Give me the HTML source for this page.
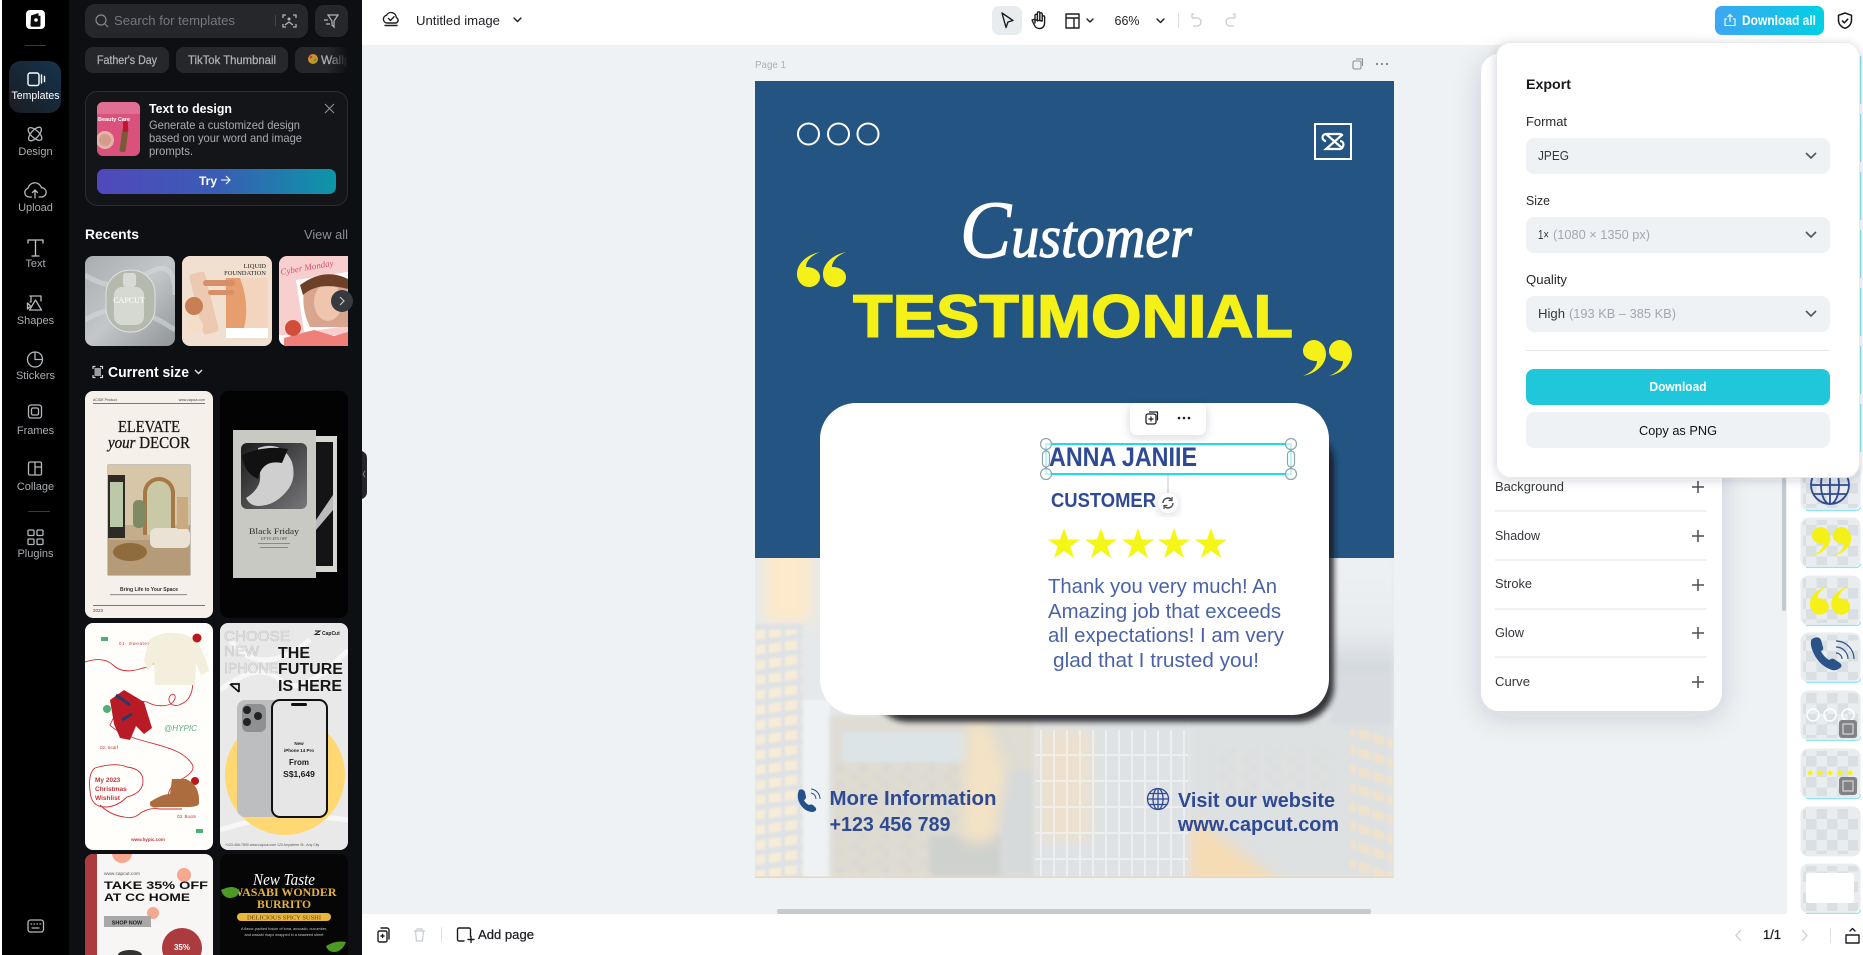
<!DOCTYPE html>
<html><head><meta charset="utf-8"><title>Untitled image</title>
<style>
html,body{margin:0;padding:0;width:1863px;height:955px;overflow:hidden;background:#fff}
svg{display:block;font-family:"Liberation Sans",sans-serif}
.rl{font-size:11px;fill:#a9acb1;text-anchor:middle}
.ic{fill:none;stroke:#b4b7bb;stroke-width:1.3;stroke-linecap:round;stroke-linejoin:round}
.k{fill:none;stroke:#1b1d20;stroke-width:1.4;stroke-linecap:round;stroke-linejoin:round}
.lb{font-size:13px;fill:#33363b}
.pl{fill:none;stroke:#4a4d52;stroke-width:1.5}
</style></head><body>
<svg width="1863" height="955" viewBox="0 0 1863 955" xmlns="http://www.w3.org/2000/svg">
<defs>
<linearGradient id="gTry" x1="0" x2="1"><stop offset="0" stop-color="#5148bd"/><stop offset=".5" stop-color="#3a5cb4"/><stop offset="1" stop-color="#0b97a8"/></linearGradient>
<linearGradient id="gDl" x1="0" x2="1"><stop offset="0" stop-color="#3ea6f2"/><stop offset="1" stop-color="#00d0e3"/></linearGradient>
<linearGradient id="gTpl" x1="0" y1="1" x2="1" y2="0"><stop offset="0" stop-color="#1a1c20"/><stop offset="1" stop-color="#15344e"/></linearGradient>
<linearGradient id="gFade" x1="0" x2="1"><stop offset="0" stop-color="#0e0f12" stop-opacity="0"/><stop offset="1" stop-color="#0e0f12"/></linearGradient>
<linearGradient id="gB" x1="0" x2="1" y1="0" y2="1"><stop offset="0" stop-color="#1b1b1b"/><stop offset="1" stop-color="#77777a"/></linearGradient>
<linearGradient id="gSilk" x1="0" x2="1" y1="0" y2="1"><stop offset="0" stop-color="#a9adb0"/><stop offset=".5" stop-color="#c4c7c9"/><stop offset="1" stop-color="#8f9497"/></linearGradient>
<linearGradient id="gRt" x1="0" x2="0" y1="0" y2="1"><stop offset="0" stop-color="#eef1f3"/><stop offset=".6" stop-color="#e8ebee"/><stop offset="1" stop-color="#cfd4d8"/></linearGradient>
<pattern id="chk" width="21" height="21" patternUnits="userSpaceOnUse"><rect width="21" height="21" fill="#e9edf0"/><rect width="10.5" height="10.5" fill="#d9dfe2"/><rect x="10.5" y="10.5" width="10.5" height="10.5" fill="#d9dfe2"/></pattern>
<pattern id="win" width="16" height="15" patternUnits="userSpaceOnUse" patternTransform="skewY(-8)"><rect x="1" y="2" width="12" height="9" fill="#fbeed6"/></pattern>
<pattern id="win2" width="14" height="19" patternUnits="userSpaceOnUse" patternTransform="skewY(18)"><rect x="1" y="2" width="11" height="9" fill="#f7e3c2"/></pattern>
<pattern id="grid" width="13" height="26" patternUnits="userSpaceOnUse"><rect width="2" height="26" fill="#f3f5f6"/><rect width="13" height="2" fill="#f3f5f6"/></pattern>
<pattern id="dots" width="23" height="17" patternUnits="userSpaceOnUse"><circle cx="4" cy="4" r="2.2" fill="#f6dcae"/><circle cx="15" cy="11" r="1.8" fill="#f3cf97"/><rect x="9" y="1" width="6" height="4" fill="#c3c8ca"/><rect x="1" y="10" width="7" height="5" fill="#ccd0d1"/></pattern>
<filter id="b1" x="-5%" y="-5%" width="110%" height="110%"><feGaussianBlur stdDeviation="1"/></filter>
<filter id="b3" x="-20%" y="-20%" width="140%" height="140%"><feGaussianBlur stdDeviation="3"/></filter>
<filter id="b6" x="-30%" y="-30%" width="160%" height="160%"><feGaussianBlur stdDeviation="7"/></filter>
<filter id="sh" x="-20%" y="-20%" width="140%" height="140%"><feDropShadow dx="0" dy="6" stdDeviation="14" flood-color="#20303c" flood-opacity=".16"/></filter>
<filter id="sh2" x="-20%" y="-20%" width="140%" height="140%"><feDropShadow dx="0" dy="2" stdDeviation="5" flood-color="#20303c" flood-opacity=".18"/></filter>
<clipPath id="cPage"><rect x="755" y="81" width="639" height="797"/></clipPath>
<clipPath id="cPhoto"><rect x="755" y="558" width="639" height="320"/></clipPath>
<clipPath id="cR1"><rect x="85" y="256" width="90" height="90" rx="8"/></clipPath>
<clipPath id="cR2"><rect x="182" y="256" width="90" height="90" rx="8"/></clipPath>
<clipPath id="cR3"><path d="M287 256H348V346H287a8 8 0 0 1-8-8V264a8 8 0 0 1 8-8Z"/></clipPath>
<clipPath id="c11"><rect x="85" y="391" width="128" height="227" rx="8"/></clipPath>
<clipPath id="c21"><rect x="85" y="623" width="128" height="227" rx="8"/></clipPath>
<clipPath id="c22"><rect x="220" y="623" width="128" height="227" rx="8"/></clipPath>
<clipPath id="c31"><rect x="85" y="854" width="128" height="110" rx="8"/></clipPath>
<clipPath id="c32"><rect x="220" y="854" width="128" height="110" rx="8"/></clipPath>
<clipPath id="cThumb"><rect x="97" y="102" width="43" height="54" rx="6"/></clipPath>
<clipPath id="cChip"><rect x="295" y="47" width="53" height="26"/></clipPath>
<g id="qo"><path d="M820 252C810 256 806 262 806 267C814 267 820 271 820 277C820 283 815 287 809 287C802 287 797 281 797 274C797 264 806 255 820 252Z"/><path d="M846 252C836 256 832 262 832 267C840 267 846 271 846 277C846 283 841 287 835 287C828 287 823 281 823 274C823 264 832 255 846 252Z"/></g>
<g id="qc"><path d="M1303 376C1313 372 1317 366 1317 361C1309 361 1303 357 1303 351C1303 345 1308 340 1314 340C1321 340 1326 347 1326 354C1326 364 1317 373 1303 376Z"/><path d="M1329 376C1339 372 1343 366 1343 361C1335 361 1329 357 1329 351C1329 345 1334 340 1340 340C1347 340 1352 347 1352 354C1352 364 1343 373 1329 376Z"/></g>
</defs>

<!-- base -->
<rect width="1863" height="955" fill="#fff"/>
<rect x="362" y="45" width="1501" height="869" fill="#eff2f5"/>

<!-- left rail -->
<rect x="2" y="0" width="67" height="955" fill="#000"/>
<rect x="69" y="0" width="293" height="955" fill="#0e0f12"/>
<rect x="26" y="10" width="19" height="19" rx="4" fill="#fff"/>
<path d="M31 15.5l7.5-2.5v2.8h2v9.5a1.5 1.5 0 0 1-1.5 1.5h-7a1.5 1.5 0 0 1-1.5-1.5Z" fill="#0c0c0c"/><circle cx="36" cy="20" r="1.8" fill="#fff"/>
<rect x="25" y="45" width="21" height="1" fill="#3a3b3e"/>
<rect x="9" y="61" width="52" height="52" rx="12" fill="url(#gTpl)"/>
<rect x="28" y="73" width="11" height="12.5" rx="2" fill="none" stroke="#fff" stroke-width="1.4"/><path d="M41.5 75v8M44.5 76.5v5" stroke="#fff" stroke-width="1.4" stroke-linecap="round"/>
<text x="35.5" y="99" class="rl" style="fill:#fff" textLength="48" lengthAdjust="spacingAndGlyphs">Templates</text>
<g class="ic"><ellipse cx="35" cy="134" rx="3.8" ry="8.5" transform="rotate(42 35 134)"/><ellipse cx="35" cy="134" rx="3.8" ry="8.5" transform="rotate(-48 35 134)"/></g>
<text x="35.5" y="155" class="rl">Design</text>
<path class="ic" d="M31.5 197H29a4.5 4.5 0 0 1-1-8.8 7 7 0 0 1 13.5-.5 4.6 4.6 0 0 1 0 9.3H39M35 198v-8M32.5 192.5l2.5-2.5 2.5 2.5"/>
<text x="35.5" y="211" class="rl">Upload</text>
<path class="ic" d="M28 243v-3h15v3M35.5 240v16M32 256h7" style="stroke:#c4c6c9"/>
<text x="35.5" y="267" class="rl">Text</text>
<path class="ic" d="M30 296h11v5M31 296v6h-1M27.5 303l3 3-3 3zM35.5 300l6 10h-12z"/>
<text x="35.5" y="324" class="rl">Shapes</text>
<path class="ic" d="M35 352a7.5 7.5 0 1 0 7.5 7.5h-7.5zM35 352c4.5 0 7.5 3 7.5 7.5"/>
<text x="35.5" y="379" class="rl">Stickers</text>
<rect x="28.5" y="405" width="13" height="13" rx="2.5" class="ic"/><rect x="31.5" y="408" width="7" height="7" rx="1.5" class="ic"/>
<text x="35.5" y="434" class="rl">Frames</text>
<path class="ic" d="M30 462h10a1.5 1.5 0 0 1 1.5 1.5v10a1.5 1.5 0 0 1-1.5 1.5H30a1.5 1.5 0 0 1-1.5-1.5v-10A1.5 1.5 0 0 1 30 462ZM35 462v13M35 467h6.5"/>
<text x="35.5" y="490" class="rl">Collage</text>
<rect x="28" y="511" width="22" height="1" fill="#3a3b3e"/>
<g class="ic"><rect x="28" y="530" width="6" height="5.5" rx="1"/><rect x="37" y="530" width="6" height="5.5" rx="1"/><rect x="28" y="539" width="6" height="5.5" rx="1"/><rect x="37" y="539" width="6" height="5.5" rx="1"/></g>
<text x="35.5" y="557" class="rl">Plugins</text>
<rect x="28" y="920" width="15.5" height="12" rx="2.5" class="ic"/><path d="M31 924h.6M34 924h.6M37 924h.6M40 924h.6M32 928h7" class="ic"/>

<!-- panel search -->
<rect x="85" y="4" width="223" height="34" rx="10" fill="#26272b"/>
<circle cx="101" cy="20" r="5" fill="none" stroke="#85888d" stroke-width="1.2"/><path d="M105 24l3 3" stroke="#85888d" stroke-width="1.2"/>
<text x="114" y="25" font-size="13" fill="#74777c" textLength="121" lengthAdjust="spacingAndGlyphs">Search for templates</text>
<rect x="275" y="15" width="1" height="11" fill="#44464a"/>
<path d="M283 18v-3h3M293 15h3v3M296 24v3h-3M286 27h-3v-3" fill="none" stroke="#b4b6ba" stroke-width="1.3"/><circle cx="289" cy="19" r="1.5" fill="#b4b6ba"/><path d="M285 25l4-3 4 3" fill="none" stroke="#b4b6ba" stroke-width="1.3"/>
<rect x="315" y="5" width="33" height="32" rx="9" fill="#26272b"/>
<path d="M328 15h10l-4 6v6l-2-2v-4zM324 20h4M326 24h4" fill="none" stroke="#b4b6ba" stroke-width="1.2"/>
<!-- chips -->
<rect x="85" y="47" width="84" height="26" rx="8" fill="#26272b"/>
<text x="127" y="64" font-size="12" fill="#b0b2b6" stroke="#b0b2b6" stroke-width=".25" text-anchor="middle" textLength="60" lengthAdjust="spacingAndGlyphs">Father's Day</text>
<rect x="176" y="47" width="112" height="26" rx="8" fill="#26272b"/>
<text x="232" y="64" font-size="12" fill="#b0b2b6" stroke="#b0b2b6" stroke-width=".25" text-anchor="middle" textLength="88" lengthAdjust="spacingAndGlyphs">TikTok Thumbnail</text>
<g clip-path="url(#cChip)"><rect x="295" y="47" width="70" height="26" rx="8" fill="#26272b"/><circle cx="313" cy="59" r="5" fill="#c9932c"/><circle cx="311" cy="57" r="1.3" fill="#d33"/><circle cx="315" cy="60" r="1.3" fill="#4a4"/>
<text x="321" y="64" font-size="12" fill="#b0b2b6" stroke="#b0b2b6" stroke-width=".25">Wallpaper</text><rect x="328" y="47" width="20" height="26" fill="url(#gFade)"/></g>
<!-- text to design -->
<rect x="85.5" y="91.5" width="262" height="114" rx="12" fill="#141518" stroke="#2c2d31"/>
<g clip-path="url(#cThumb)"><rect x="97" y="102" width="43" height="54" fill="#d9517c"/><rect x="97" y="102" width="43" height="12" fill="#e06f93"/><circle cx="105" cy="140" r="9" fill="#e3b4a6"/><circle cx="105" cy="140" r="6" fill="#d39b8b"/><rect x="121" y="128" width="6" height="24" rx="1.5" fill="#7a5a35" transform="rotate(8 124 140)"/><rect x="123" y="121" width="5" height="11" rx="2" fill="#c01530"/><text x="98" y="121" font-size="5.5" font-weight="700" fill="#fff">Beauty Care</text></g>
<text x="149" y="113" font-size="13" font-weight="700" fill="#fff" textLength="83" lengthAdjust="spacingAndGlyphs">Text to design</text>
<g font-size="12" fill="#a8abb0"><text x="149" y="129" textLength="151" lengthAdjust="spacingAndGlyphs">Generate a customized design</text><text x="149" y="142" textLength="153" lengthAdjust="spacingAndGlyphs">based on your word and image</text><text x="149" y="155" textLength="44" lengthAdjust="spacingAndGlyphs">prompts.</text></g>
<path d="M325 104l9 9M334 104l-9 9" stroke="#8f9296" stroke-width="1.1"/>
<rect x="97" y="169" width="239" height="25" rx="7" fill="url(#gTry)"/>
<text x="208" y="185" font-size="12" font-weight="700" fill="#fff" text-anchor="middle">Try</text>
<path d="M221 180h9M226 176l4 4-4 4" fill="none" stroke="#fff" stroke-width="1.1"/>
<!-- recents -->
<text x="85" y="239" font-size="14" font-weight="700" fill="#fff" textLength="54" lengthAdjust="spacingAndGlyphs">Recents</text>
<text x="348" y="239" font-size="12.5" fill="#8a8e94" text-anchor="end" textLength="44" lengthAdjust="spacingAndGlyphs">View all</text>
<g clip-path="url(#cR1)"><rect x="85" y="256" width="90" height="90" fill="url(#gSilk)"/><path d="M85 275q30 20 60 0t30 20M85 320q40-25 90 10" stroke="#d6d8da" stroke-width="5" fill="none" opacity=".6"/><rect x="106" y="270" width="49" height="62" rx="24" fill="#b5b9ae" stroke="#dfe2e2" stroke-width="1"/><rect x="123" y="273" width="13" height="14" rx="3" fill="#d9dad6"/><rect x="114" y="287" width="30" height="38" rx="8" fill="#d6d8d2"/><text x="129" y="303" font-size="8" fill="#fff" text-anchor="middle" font-family="Liberation Serif">CAPCUT</text></g>
<g clip-path="url(#cR2)"><rect x="182" y="256" width="90" height="90" fill="#f1e0cf"/><rect x="196" y="272" width="16" height="62" rx="3" fill="#eec9b2" transform="rotate(-14 204 303)"/><rect x="226" y="278" width="42" height="50" fill="#e79e6e"/><path d="M240 278h28v50h-24q6-24-4-50" fill="#f3d4bf"/><rect x="226" y="328" width="42" height="10" fill="#fff"/><text x="266" y="268" font-size="6.5" fill="#222" text-anchor="end" font-family="Liberation Serif">LIQUID</text><text x="266" y="275" font-size="6.5" fill="#222" text-anchor="end" font-family="Liberation Serif">FOUNDATION</text><rect x="203" y="280" width="32" height="6" rx="3" fill="#d78f67"/><rect x="208" y="290" width="26" height="5" rx="2.5" fill="#d78f67"/><circle cx="194" cy="306" r="9" fill="#c97e55"/><circle cx="195" cy="326" r="8" fill="#f6ddc7"/></g>
<g clip-path="url(#cR3)"><rect x="279" y="256" width="69" height="90" fill="#f7cfcf"/><path d="M296 280l52-8v54l-44 6z" fill="#fff"/><path d="M305 285h43v42h-38q-10-20-5-42" fill="#d9a58e"/><ellipse cx="328" cy="302" rx="14" ry="19" fill="#f0c5ad"/><path d="M300 285q25-18 48-6v10q-30-8-45 6z" fill="#6e4028"/><rect x="279" y="335" width="69" height="11" fill="#fff"/><path d="M284 338l30-8 20 6 14-4v14h-64z" fill="#f07f7a"/><circle cx="293" cy="328" r="8" fill="#cf4e3a"/><text x="281" y="275" font-size="9" fill="#e0506a" font-style="italic" font-family="Liberation Serif" transform="rotate(-10 281 275)">Cyber Monday</text></g>
<circle cx="342" cy="301" r="11" fill="#36393e"/><path d="M340 297l4 4-4 4" fill="none" stroke="#c3c5c8" stroke-width="1.2"/>
<path d="M93 369v-2.5h2.5M100 366.5h2.5v2.5M102.5 375v2.500H100M95.500 377.500H93V375" fill="none" stroke="#d5d6d8" stroke-width="1.2"/><rect x="94.5" y="368" width="6.5" height="8" fill="#9a9c9f"/>
<text x="108" y="377" font-size="14.5" font-weight="700" fill="#fff" textLength="81" lengthAdjust="spacingAndGlyphs">Current size</text>
<path d="M195 370l3.5 3.5 3.5-3.5" fill="none" stroke="#e3e4e6" stroke-width="1.4"/>

<!-- template 1 -->
<g clip-path="url(#c11)"><rect x="85" y="391" width="128" height="227" fill="#f5f0ea"/>
<text x="93" y="401" font-size="3.5" fill="#444">ACIDE Product</text><text x="205" y="401" font-size="3.5" fill="#444" text-anchor="end">www.capcut.com</text><rect x="93" y="403" width="112" height=".7" fill="#444"/>
<text x="149" y="432" font-size="17" fill="#1a1714" stroke="#1a1714" stroke-width=".3" text-anchor="middle" font-family="Liberation Serif" textLength="62" lengthAdjust="spacingAndGlyphs">ELEVATE</text>
<text x="149" y="448" font-size="17" fill="#1a1714" stroke="#1a1714" stroke-width=".3" text-anchor="middle" font-family="Liberation Serif" textLength="82" lengthAdjust="spacingAndGlyphs"><tspan font-style="italic">your</tspan> DECOR</text>
<rect x="108" y="465" width="82" height="110" fill="#c4ad8b" stroke="#6f6b63" stroke-width=".7"/><rect x="108" y="465" width="82" height="60" fill="#d8c6a9"/><path d="M108 475h17v63h-17z" fill="#2e2b27"/><path d="M110 482h13v45h-13z" fill="#bcc9a9"/><path d="M143 535v-42a16 16 0 0 1 32 0v42z" fill="#a67845"/><path d="M147 535v-42a12 12 0 0 1 24 0v42z" fill="#c9c9a8"/><rect x="108" y="540" width="82" height="35" fill="#b59b77"/><rect x="150" y="528" width="40" height="20" rx="6" fill="#e9e2d5"/><ellipse cx="130" cy="552" rx="17" ry="9" fill="#8f6b3e"/><rect x="133" y="500" width="12" height="28" fill="#7e8a63" rx="5"/><rect x="177" y="497" width="11" height="32" fill="#c9ab7f"/>
<text x="149" y="591" font-size="5" font-weight="700" fill="#333" text-anchor="middle" textLength="58" lengthAdjust="spacingAndGlyphs">Bring Life to Your Space</text>
<rect x="110" y="594" width="77" height="1.2" fill="#999"/><rect x="93" y="605" width="112" height=".7" fill="#444"/><text x="93" y="612" font-size="4.5" fill="#444">2023</text></g>
<!-- template 2 -->
<rect x="220" y="391" width="128" height="227" rx="8" fill="#030303"/>
<rect x="300" y="436" width="37" height="136" fill="#d7d7d2"/><rect x="316" y="442" width="17" height="124" fill="#141414"/><path d="M316 520l17-25v15l-17 20z" fill="#bbb"/>
<rect x="233" y="430" width="83" height="148" fill="#c9c9c3"/>
<rect x="241" y="443" width="66" height="66" rx="6" fill="url(#gB)"/><path d="M258 448q24-8 34 14 5 18-6 30-12 14-28 14-8 0-12-8 16-10 14-24-1-12-2-26z" fill="#cfcfcf"/><path d="M242 455q22-10 46-6l-6 14q-20-4-24 16-14-6-16-24z" fill="#111"/>
<text x="274" y="534" font-size="8.5" fill="#2b2b2b" text-anchor="middle" font-family="Liberation Serif" textLength="50" lengthAdjust="spacingAndGlyphs">Black Friday</text>
<text x="274" y="540" font-size="3.8" fill="#444" text-anchor="middle" font-family="Liberation Serif">UP TO 45% OFF</text>
<rect x="258" y="543" width="32" height="1" fill="#888"/><rect x="260" y="547" width="28" height="1" fill="#888"/>
<!-- template 3 -->
<g clip-path="url(#c21)"><rect x="85" y="623" width="128" height="227" fill="#fffefa"/>
<path d="M85 662q18-6 28 3 10 10 30 3 4 0 12-5M193 680c0 15-5 22-14 25-8 2-12-4-9-9 3-4 8-1 3 6-4 5-18 5-26 0-8-2-16 0-22 3-8 4-12 14-15 20q5 6 24 13c24 8 48 10 58 26 4 6-4 12-12 16-6 4-12 8-12 18M100 805q10 10 24 12 8 2 14-2 10-8 22-6h22" fill="none" stroke="#cf2c35" stroke-width=".9"/>
<path d="M150 639q14-8 24-6 14 0 24 10 8 14 11 28l-8 4-5-12-1 22h-40l-1-22-6 8-4-10q2-14 6-22z" fill="#f4eedd"/>
<circle cx="197" cy="638" r="4.5" fill="#b8191d"/><circle cx="195" cy="781" r="4" fill="#b8191d"/><circle cx="107" cy="709" r="4" fill="#4caf74"/>
<path d="M110 700l14-10 20 12 8 26-8 6-8-8-6 14-10-2-6-14z" fill="#b81b25"/><path d="M116 695l14 10M122 720l10-6" stroke="#263a6b" stroke-width="3"/>
<path d="M150 802q12-8 20-8l2-15h14q14 6 13 24 0 4-12 4h-28q-10 2-9-5z" fill="#ad6c3d"/>
<path d="M95 768q20-6 32-1 16 2 16 14t-16 16q-10 10-22 10-14 0-15-16-2-18 5-23z" fill="none" stroke="#cf2c35" stroke-width=".9"/>
<g font-size="6.5" font-weight="700" fill="#c6333b"><text x="95" y="782">My 2023</text><text x="95" y="791">Christmas</text><text x="95" y="800">Wishlist</text></g>
<g font-size="4.5" fill="#c6333b"><text x="119" y="645" textLength="30">01. Sweater</text><text x="100" y="749">02. Scarf</text><text x="177" y="818">03. Boots</text></g>
<text x="164" y="731" font-size="8.5" font-style="italic" fill="#55b087" textLength="33" lengthAdjust="spacingAndGlyphs">@HYPIC</text>
<text x="148" y="841" font-size="4.5" font-weight="700" fill="#c6333b" text-anchor="middle">www.hypic.com</text>
<rect x="101" y="637" width="7" height="4" fill="#4caf74"/><rect x="196" y="829" width="7" height="4" fill="#4caf74"/></g>
<!-- template 4 -->
<g clip-path="url(#c22)"><rect x="220" y="623" width="128" height="227" fill="#e9e9e9"/><path d="M220 690q40-30 60-10t68-30M230 640q30 40 80 0M220 830q60-20 128-10" stroke="#f7f7f7" stroke-width="5" fill="none"/>
<circle cx="285" cy="775" r="60" fill="#ffd873"/>
<rect x="237" y="700" width="55" height="117" rx="8" fill="#bdbebf"/><rect x="242" y="704" width="24" height="28" rx="6" fill="#8f9092"/><circle cx="247" cy="710" r="4" fill="#222"/><circle cx="258" cy="716" r="4" fill="#222"/><circle cx="247" cy="722" r="4" fill="#222"/>
<rect x="272" y="700" width="55" height="117" rx="8" fill="#e6e6e6" stroke="#111" stroke-width="2"/><rect x="291" y="703" width="16" height="3" rx="1.5" fill="#111"/>
<g font-size="15.5" font-weight="700" fill="#171717"><text x="278" y="658" textLength="32" lengthAdjust="spacingAndGlyphs">THE</text><text x="278" y="674" textLength="65" lengthAdjust="spacingAndGlyphs">FUTURE</text><text x="278" y="691" textLength="64" lengthAdjust="spacingAndGlyphs">IS HERE</text></g>
<g font-size="15" fill="none" stroke="#c6c6c6" stroke-width=".6"><text x="224" y="641" textLength="66" lengthAdjust="spacingAndGlyphs">CHOOSE</text><text x="224" y="656">NEW</text><text x="224" y="673" textLength="54" lengthAdjust="spacingAndGlyphs">IPHONE</text></g>
<path d="M231 684h8v8M239 692l-9-8" fill="none" stroke="#111" stroke-width="1.7"/>
<g fill="#1c1c1c" text-anchor="middle" font-weight="700"><text x="299" y="745" font-size="4.5">New</text><text x="299" y="752" font-size="4.5">iPhone 14 Pro</text><text x="299" y="765" font-size="8">From</text><text x="299" y="777" font-size="8.5">S$1,649</text></g>
<text x="322" y="635" font-size="5" font-weight="700" fill="#222">CapCut</text><path d="M315 631h5l-5 3.5h5" stroke="#222" fill="none"/>
<text x="225" y="846" font-size="3.5" fill="#555">+123-456-7890   www.capcut.com   123 Anywhere St., Any City</text></g>
<!-- template 5 -->
<g clip-path="url(#c31)"><rect x="85" y="854" width="128" height="110" fill="#f7f6f4"/><rect x="85" y="854" width="12" height="110" fill="#ab3b3f"/><circle cx="122" cy="853" r="10" fill="#f6a78f"/><circle cx="184" cy="875" r="7" fill="#f6a78f"/><circle cx="153" cy="913" r="6" fill="#f6a78f"/>
<text x="104" y="875" font-size="4.8" fill="#555">www.capcut.com</text>
<text x="104" y="889" font-size="11" font-weight="700" fill="#111" textLength="104" lengthAdjust="spacingAndGlyphs">TAKE 35% OFF</text><text x="104" y="901" font-size="11" font-weight="700" fill="#111" textLength="86" lengthAdjust="spacingAndGlyphs">AT CC HOME</text>
<rect x="104" y="916" width="47" height="11" fill="#a8a8a8"/><text x="127" y="924.5" font-size="5.5" font-weight="700" fill="#222" text-anchor="middle">SHOP NOW</text>
<circle cx="182" cy="948" r="20" fill="#ab3b3f"/><text x="182" y="950" font-size="8" font-weight="700" fill="#fff" text-anchor="middle">35%</text><ellipse cx="130" cy="955" rx="12" ry="5" fill="#333"/></g>
<!-- template 6 -->
<g clip-path="url(#c32)"><rect x="220" y="854" width="128" height="110" fill="#060606"/>
<text x="284" y="885" font-size="17" font-style="italic" fill="#fff" text-anchor="middle" font-family="Liberation Serif" textLength="62" lengthAdjust="spacingAndGlyphs">New Taste</text>
<text x="284" y="896" font-size="12" font-weight="700" fill="#e6b33b" text-anchor="middle" font-family="Liberation Serif" textLength="105" lengthAdjust="spacingAndGlyphs">WASABI WONDER</text>
<text x="284" y="908" font-size="12" font-weight="700" fill="#e6b33b" text-anchor="middle" font-family="Liberation Serif" textLength="54" lengthAdjust="spacingAndGlyphs">BURRITO</text>
<rect x="237" y="913" width="94" height="8" rx="4" fill="#e8b63d"/><text x="284" y="919.5" font-size="6" fill="#523f12" text-anchor="middle" font-family="Liberation Serif" textLength="74" lengthAdjust="spacingAndGlyphs">DELICIOUS SPICY SUSHI</text>
<g fill="#c9c9c9" font-size="3.8" text-anchor="middle"><text x="284" y="930">A flavor-packed fusion of tuna, avocado, cucumber,</text><text x="284" y="936">and wasabi mayo wrapped in a seaweed sheet</text></g>
<path d="M221 890q12-6 18 0 0 8-10 8-6-1-8-8z" fill="#4c9a23"/><path d="M326 946q10-6 20-4-4 10-12 10-6 0-8-6z" fill="#4c9a23"/></g>
<!-- collapse handle -->
<path d="M362 451q5 2 5 7v34q0 5-5 7z" fill="#24252a"/><path d="M365 471l-2 3 2 3" stroke="#77797d" fill="none"/>

<!-- top bar -->
<path class="k" d="M387 23h8.5a2.8 2.8 0 0 0 .8-5.4 5.2 5.2 0 0 0-9.800-2.300 3.900 3.900 0 0 0 .5 7.700ZM388.500 18.500l2 2 3.500-3.800M385 25.500h12"/>
<text x="416" y="25" font-size="13" fill="#1c1e21" textLength="84" lengthAdjust="spacingAndGlyphs">Untitled image</text>
<path class="k" d="M514 18l3.5 3.5 3.5-3.5" />
<rect x="992" y="6" width="30" height="29" rx="7" fill="#e9ecef"/>
<path class="k" d="M1002 13l11 7.5-5 1.5-2 5.5-4-14.5" />
<path class="k" d="M1035 23v-7.5a1.2 1.2 0 0 1 2.4 0V21M1037.4 20v-7a1.2 1.2 0 0 1 2.4 0v7M1039.8 20v-6a1.2 1.2 0 0 1 2.4 0v7M1042.2 21v-4a1.2 1.2 0 0 1 2.4 0v6c0 3-2 5.5-5 5.5-3.5 0-4.5-1.5-6.5-6l-1-2.5 1.5-.5z" />
<path class="k" d="M1066 14h13v14h-13zM1066 18h13M1074 18v10"/>
<path class="k" d="M1087 19l3 3 3-3M1157 19l3.5 3.5 3.5-3.5"/>
<text x="1127" y="25" font-size="13" fill="#1c1e21" text-anchor="middle" textLength="25" lengthAdjust="spacingAndGlyphs">66%</text>
<rect x="1178" y="13" width="1" height="15" fill="#dcdfe2"/>
<path d="M1194 14h-2v4M1192 18h5a4 4 0 0 1 0 8h-4M1233 14h2v4M1235 18h-5a4 4 0 0 0 0 8h4" fill="none" stroke="#c8ccd0" stroke-width="1.3"/>
<text x="755" y="68" font-size="10.5" fill="#a9afb6" textLength="31" lengthAdjust="spacingAndGlyphs">Page 1</text>
<rect x="1353" y="61" width="8" height="8" rx="1.5" fill="none" stroke="#8d9196" stroke-width="1.1"/><path d="M1356 59h6.500v7" fill="none" stroke="#8d9196" stroke-width="1.1"/>
<g fill="#7c8085"><circle cx="1377" cy="64" r="1.1"/><circle cx="1382" cy="64" r="1.1"/><circle cx="1387" cy="64" r="1.1"/></g>

<!-- page -->
<g clip-path="url(#cPage)">
<g clip-path="url(#cPhoto)">
<rect x="755" y="558" width="639" height="320" fill="#e6e9eb"/>
<g filter="url(#b6)"><rect x="764" y="540" width="48" height="82" fill="#fde9cb"/></g>
<g filter="url(#b1)">
<rect x="755" y="624" width="48" height="254" fill="#dfe2e4"/>
<rect x="756" y="630" width="46" height="248" fill="url(#win)" opacity=".85"/>
<rect x="803" y="700" width="27" height="178" fill="#eef2f4"/>
</g>
<g filter="url(#b3)">
<rect x="830" y="715" width="205" height="163" fill="#dedcd3"/>
<rect x="842" y="732" width="125" height="30" fill="#dde4e8"/>
<rect x="835" y="762" width="130" height="116" fill="url(#dots)" opacity=".5"/>
<rect x="930" y="835" width="70" height="43" fill="#cfd1ce"/>
<rect x="1000" y="770" width="35" height="108" fill="#d7dadb"/>
<rect x="1188" y="715" width="206" height="163" fill="#dee1e2"/>
<rect x="1210" y="750" width="120" height="50" fill="url(#dots)" opacity=".35"/>
<rect x="1329" y="558" width="65" height="120" fill="url(#gRt)"/>
<rect x="1329" y="670" width="65" height="55" fill="#d8dce0"/>
</g>
<g filter="url(#b6)"><path d="M968 722l18 0 20 50-14 70h-30z" fill="#f3e2c4"/><path d="M1190 815l95 70h-95z" fill="#f6dcb4"/></g>
<rect x="1035" y="715" width="153" height="163" fill="#dfe2e4"/>
<g filter="url(#b6)"><rect x="1040" y="730" width="50" height="110" fill="#f0e0c8" opacity=".8"/></g>
<rect x="1035" y="730" width="153" height="148" fill="url(#grid)" opacity=".65"/>
<rect x="1350" y="730" width="44" height="148" fill="url(#win2)" opacity=".7" filter="url(#b1)"/>
<rect x="755" y="876.500" width="639" height="1.500" fill="#ecd6b6"/>
</g>
<rect x="755" y="81" width="639" height="477" fill="#245482"/>

<g fill="none" stroke="#fff" stroke-width="2"><circle cx="808.500" cy="134" r="10.500"/><circle cx="838.500" cy="134" r="10.500"/><circle cx="868" cy="134" r="10.500"/><rect x="1315" y="124" width="36" height="35"/></g>
<path d="M1326 134h14a3 3 0 0 1 2 1l-16 14h14a3 3 0 0 0 2-1l-16-14a3.500 3.500 0 0 0 0 7M1340 148a3.500 3.500 0 0 0 0-7" fill="none" stroke="#fff" stroke-width="2.200"/>
<text x="960" y="257" font-size="60" font-style="italic" fill="#fff" font-family="Liberation Serif" textLength="232" lengthAdjust="spacingAndGlyphs" stroke="#fff" stroke-width="1.100"><tspan font-size="82">C</tspan>ustomer</text>
<text x="853" y="337" font-size="60" font-weight="700" fill="#f5f017" stroke="#f5f017" stroke-width="1.400" textLength="440" lengthAdjust="spacingAndGlyphs">TESTIMONIAL</text>
<g fill="#f5f017"><use href="#qo"/><use href="#qc"/></g>
<rect x="872" y="428" width="462" height="294" rx="36" fill="#14181d" opacity=".85" filter="url(#b3)"/>
<rect x="820" y="403" width="509" height="312" rx="36" fill="#fff"/>
<text x="1049" y="466" font-size="27" font-weight="700" fill="#2f4a94" textLength="148" lengthAdjust="spacingAndGlyphs">ANNA JANIIE</text>
<text x="1051" y="507" font-size="20" font-weight="700" fill="#2f4a94" textLength="105" lengthAdjust="spacingAndGlyphs">CUSTOMER</text>
<g fill="#f5f517"><path d="M1064 528l4 11.500h12l-9.700 7 3.700 11.500-10-7-10 7 3.700-11.500-9.700-7h12z"/><path d="M1101 528l4 11.500h12l-9.700 7 3.700 11.500-10-7-10 7 3.700-11.500-9.700-7h12z"/><path d="M1138 528l4 11.500h12l-9.700 7 3.700 11.500-10-7-10 7 3.700-11.500-9.700-7h12z"/><path d="M1174 528l4 11.500h12l-9.700 7 3.700 11.500-10-7-10 7 3.700-11.500-9.700-7h12z"/><path d="M1211 528l4 11.500h12l-9.700 7 3.700 11.500-10-7-10 7 3.700-11.500-9.700-7h12z"/></g>
<g font-size="20.500" fill="#4a63a8"><text x="1048" y="593" textLength="229" lengthAdjust="spacingAndGlyphs">Thank you very much! An</text><text x="1048" y="618" textLength="233" lengthAdjust="spacingAndGlyphs">Amazing job that exceeds</text><text x="1048" y="642" textLength="236" lengthAdjust="spacingAndGlyphs">all expectations! I am very</text><text x="1053" y="667" textLength="206" lengthAdjust="spacingAndGlyphs">glad that I trusted you!</text></g>
<path d="M799 790q4-2 6 2l1 5q0 2-2 3 1 3 5 5 2-1 4 0l3 3q1 3-3 4-8 0-13-8-4-7-1-14z" fill="#24508a"/>
<path d="M811 789a10 10 0 0 1 9 10M811 793a6 6 0 0 1 5 6" fill="none" stroke="#24508a" stroke-width="1"/>
<g fill="#2f4a94" font-weight="700"><text x="829.500" y="805" font-size="20" textLength="167" lengthAdjust="spacingAndGlyphs">More Information</text><text x="829.500" y="831" font-size="20" textLength="121" lengthAdjust="spacingAndGlyphs">+123 456 789</text><text x="1178" y="807" font-size="20" textLength="157" lengthAdjust="spacingAndGlyphs">Visit our website</text><text x="1178" y="831" font-size="20" textLength="161" lengthAdjust="spacingAndGlyphs">www.capcut.com</text></g>
<g fill="none" stroke="#2f4a94" stroke-width="1.300"><circle cx="1158" cy="799" r="10.500"/><ellipse cx="1158" cy="799" rx="5" ry="10.500"/><path d="M1158 788.500v21M1147.500 799h21M1149 793.500h18M1149 804.500h18"/></g>
</g>

<!-- selection -->
<rect x="1130" y="403" width="76" height="32" rx="7" fill="#fff" filter="url(#sh2)"/>
<rect x="1146" y="414" width="10" height="10" rx="2" fill="none" stroke="#1b1d20" stroke-width="1.300"/><path d="M1149 412h8.500v8.500M1151 416.500v5M1148.500 419h5" fill="none" stroke="#1b1d20" stroke-width="1.200"/>
<g fill="#1b1d20"><circle cx="1179" cy="418" r="1.300"/><circle cx="1184" cy="418" r="1.300"/><circle cx="1189" cy="418" r="1.300"/></g>
<path d="M1168 474v20" stroke="#bfc6c9"/>
<rect x="1046" y="444" width="245" height="30" fill="none" stroke="#1ddde9" stroke-width="2"/>
<g fill="#fff" fill-opacity=".7" stroke="#8fa5a8" stroke-width="1.200"><circle cx="1046" cy="444" r="5.500"/><circle cx="1291" cy="444" r="5.500"/><circle cx="1046" cy="474" r="5.500"/><circle cx="1291" cy="474" r="5.500"/><rect x="1042.500" y="451" width="7" height="16" rx="3.500"/><rect x="1287.500" y="451" width="7" height="16" rx="3.500"/></g>
<circle cx="1168" cy="503" r="10" fill="#fff" filter="url(#sh2)"/>
<path d="M1163 503a5 5 0 0 1 8.500-3.500M1173 503a5 5 0 0 1-8.500 3.500" fill="none" stroke="#4a4d52" stroke-width="1.400"/><path d="M1172 497v3.500h-3.500M1164 509v-3.500h3.500" fill="none" stroke="#4a4d52" stroke-width="1.200"/>

<!-- h scrollbar -->
<rect x="777" y="909" width="594" height="5" rx="2" fill="#c4cacd"/>

<!-- right layers -->
<rect x="1787" y="45" width="76" height="869" fill="#fff"/>
<rect x="1782" y="470" width="4" height="141" rx="2" fill="#c4cacd"/>
<g>
<g fill="#e9edf0"><rect x="1800" y="53" width="61" height="51" rx="8"/><rect x="1800" y="111" width="61" height="51" rx="8"/><rect x="1800" y="169" width="61" height="51" rx="8"/><rect x="1800" y="227" width="61" height="51" rx="8"/><rect x="1800" y="285" width="61" height="51" rx="8"/><rect x="1800" y="343" width="61" height="51" rx="8"/><rect x="1800" y="401" width="61" height="51" rx="8"/></g>
<path d="M1860.500 56v48M1860.500 114v48M1860.500 172v48M1860.500 230v48M1860.500 288v48M1860.500 346v48M1860.500 404v48" stroke="#92e6f0" stroke-width="1.500"/>
<g fill="#e9edf0"><rect x="1800.500" y="459.500" width="60" height="51" rx="8"/><rect x="1800.500" y="517.500" width="60" height="50" rx="8"/><rect x="1800.500" y="575.500" width="60" height="50" rx="8"/><rect x="1800.500" y="632.500" width="60" height="50" rx="8"/><rect x="1800.500" y="690.500" width="60" height="50" rx="8"/><rect x="1800.500" y="748.500" width="60" height="50" rx="8"/><rect x="1800.500" y="806.500" width="60" height="50" rx="8"/><rect x="1800.500" y="863.500" width="60" height="50" rx="8"/></g>
<g fill="url(#chk)"><rect x="1803" y="462" width="55" height="46" rx="3"/><rect x="1803" y="520" width="55" height="45" rx="3"/><rect x="1803" y="578" width="55" height="45" rx="3"/><rect x="1803" y="635" width="55" height="45" rx="3"/><rect x="1803" y="693" width="55" height="45" rx="3"/><rect x="1803" y="751" width="55" height="45" rx="3"/><rect x="1803" y="809" width="55" height="45" rx="3"/><rect x="1803" y="866" width="55" height="45" rx="3"/></g>
<path d="M1806 510.500h50q4 0 4.500-4M1806 567.500h50q4 0 4.500-4M1806 625.500h50q4 0 4.500-4M1806 682.500h50q4 0 4.500-4M1806 740.500h50q4 0 4.500-4M1806 798.500h50q4 0 4.500-4M1806 913.500h50q4 0 4.500-4" fill="none" stroke="#92e6f0" stroke-width="1.200"/>
<g fill="none" stroke="#2f4a94" stroke-width="1.800"><circle cx="1830" cy="485" r="19"/><ellipse cx="1830" cy="485" rx="9" ry="19"/><path d="M1830 466v38M1811 485h38M1813 476h34M1813 494h34"/></g>
<g fill="#f5f017"><use href="#qc" transform="translate(1812,527) scale(.8) translate(-1303,-340)"/><use href="#qo" transform="translate(1810,586) scale(.82) translate(-797,-252)"/></g>
<path d="M1814 638q5-2 7 2l2 7q1 3-2 4 2 5 8 9 3-2 5-1l6 4q3 3 0 5-4 3-8 2-12-4-18-16-4-8-3-13q0-2 3-3z" fill="#2a5488"/>
<path d="M1836 647a12 12 0 0 1 12 12M1836 641a18 18 0 0 1 18 18M1836 653a6 6 0 0 1 6 6" fill="none" stroke="#2a5488" stroke-width="1.200"/>
<g fill="none" stroke="#fff" stroke-width="1.500"><circle cx="1813" cy="715" r="6"/><circle cx="1830" cy="715" r="6"/><circle cx="1848" cy="715" r="6"/></g>
<g fill="#f5f017" font-size="9" text-anchor="middle" font-family="DejaVu Sans"><text x="1810" y="776">★</text><text x="1820" y="776">★</text><text x="1830" y="776">★</text><text x="1840" y="776">★</text><text x="1850" y="776">★</text></g>
<rect x="1839" y="720" width="18" height="18" rx="3" fill="#808285"/><rect x="1839" y="777" width="18" height="18" rx="3" fill="#808285"/>
<g fill="none" stroke="#e8e8e8" stroke-width="1"><rect x="1843" y="724" width="10" height="10"/><rect x="1843" y="781" width="10" height="10"/></g>
<rect x="1806" y="873" width="48" height="30" rx="3" fill="#fff"/>
</g>

<!-- property panel -->
<rect x="1481" y="54" width="241" height="657" rx="18" fill="#fff" filter="url(#sh)"/>
<g class="lb"><text x="1495" y="491" textLength="69" lengthAdjust="spacingAndGlyphs">Background</text><text x="1495" y="540" textLength="45" lengthAdjust="spacingAndGlyphs">Shadow</text><text x="1495" y="588" textLength="37" lengthAdjust="spacingAndGlyphs">Stroke</text><text x="1495" y="637" textLength="29" lengthAdjust="spacingAndGlyphs">Glow</text><text x="1495" y="686" textLength="35" lengthAdjust="spacingAndGlyphs">Curve</text></g>
<g fill="#f0f2f4"><rect x="1495" y="510" width="212" height="2"/><rect x="1495" y="559" width="212" height="2"/><rect x="1495" y="608" width="212" height="2"/><rect x="1495" y="656" width="212" height="2"/></g>
<path class="pl" d="M1692 487h12M1698 481v12M1692 536h12M1698 530v12M1692 585h12M1698 579v12M1692 633h12M1698 627v12M1692 682h12M1698 676v12"/>

<!-- export panel -->
<rect x="1496.500" y="42.500" width="363" height="435" rx="14" fill="#fff" stroke="#e8eaed" filter="url(#sh2)"/>
<text x="1526" y="89" font-size="13.500" font-weight="700" fill="#17191c" textLength="45" lengthAdjust="spacingAndGlyphs">Export</text>
<g font-size="12.500" fill="#26282c"><text x="1526" y="126" textLength="41" lengthAdjust="spacingAndGlyphs">Format</text><text x="1526" y="205" textLength="24" lengthAdjust="spacingAndGlyphs">Size</text><text x="1526" y="284" textLength="41" lengthAdjust="spacingAndGlyphs">Quality</text></g>
<g fill="#eff2f5"><rect x="1526" y="138" width="304" height="36" rx="8"/><rect x="1526" y="217" width="304" height="36" rx="8"/><rect x="1526" y="296" width="304" height="36" rx="8"/></g>
<g font-size="13" fill="#33363b"><text x="1538" y="160" textLength="31" lengthAdjust="spacingAndGlyphs">JPEG</text><text x="1538" y="239" textLength="11" lengthAdjust="spacingAndGlyphs">1×</text><text x="1538" y="318" textLength="27" lengthAdjust="spacingAndGlyphs">High</text></g>
<g font-size="13" fill="#a3a8ae"><text x="1553" y="239" textLength="97" lengthAdjust="spacingAndGlyphs">(1080 × 1350 px)</text><text x="1569" y="318" textLength="107" lengthAdjust="spacingAndGlyphs">(193 KB – 385 KB)</text></g>
<path d="M1806 153l5 5 5-5M1806 232l5 5 5-5M1806 311l5 5 5-5" fill="none" stroke="#51555a" stroke-width="1.600"/>
<rect x="1526" y="350" width="304" height="1" fill="#e4e6e9"/>
<rect x="1526" y="369" width="304" height="36" rx="8" fill="#20c6d9"/>
<text x="1678" y="391" font-size="12.500" font-weight="700" fill="#fff" text-anchor="middle" textLength="57" lengthAdjust="spacingAndGlyphs">Download</text>
<rect x="1526" y="412" width="304" height="36" rx="8" fill="#eff2f5"/>
<text x="1678" y="435" font-size="13" fill="#111316" text-anchor="middle" textLength="78" lengthAdjust="spacingAndGlyphs">Copy as PNG</text>

<!-- download all / shield -->
<rect x="1715" y="6" width="109" height="29" rx="7" fill="url(#gDl)"/>
<path d="M1727 19h-2v6.500h10V19h-2M1730 22v-7.500M1727.500 17l2.500-2.500 2.500 2.500" fill="none" stroke="#fff" stroke-width="1.100"/>
<text x="1742" y="25" font-size="13.500" font-weight="700" fill="#fff" textLength="74" lengthAdjust="spacingAndGlyphs">Download all</text>
<path d="M1845 13l6.500 2.300v5c0 4-2.800 6.800-6.500 8-3.700-1.200-6.500-4-6.500-8v-5z M1842 20.500l2.300 2.300 3.800-4" fill="none" stroke="#17191c" stroke-width="1.500" stroke-linejoin="round"/>

<!-- bottom bar -->
<rect x="362" y="914" width="1501" height="41" fill="#fff"/>
<rect x="378" y="931" width="9" height="11" rx="1.500" class="k"/><path class="k" d="M381 928h6a2 2 0 0 1 2 2v9M382.500 934.500v3M381 936h3"/>
<path d="M414 931h11M417 931v-2h5v2M415.500 931l1 10h6l1-10" fill="none" stroke="#c8ccd0" stroke-width="1.200"/>
<rect x="441" y="927" width="1" height="15" fill="#dfe2e5"/>
<path class="k" d="M464 941h-5a1.500 1.500 0 0 1-1.500-1.500v-10a1.500 1.500 0 0 1 1.500-1.500h10a1.500 1.500 0 0 1 1.500 1.500v7M468 939.500h6M471 936.500v6"/>
<text x="478" y="939" font-size="13" fill="#1b1d20" stroke="#1b1d20" stroke-width=".25" textLength="56" lengthAdjust="spacingAndGlyphs">Add page</text>
<path d="M1741 930l-5 5.500 5 5.500M1802 930l5 5.500-5 5.500" fill="none" stroke="#c8ccd0" stroke-width="1.200"/>
<text x="1772" y="939" font-size="13" fill="#1b1d20" stroke="#1b1d20" stroke-width=".25" text-anchor="middle">1/1</text>
<rect x="1830" y="928" width="1" height="15" fill="#dfe2e5"/>
<path class="k" d="M1846 935h13v8h-13zM1850 931l2.500-2.500 2.500 2.500"/>
</svg>
</body></html>
